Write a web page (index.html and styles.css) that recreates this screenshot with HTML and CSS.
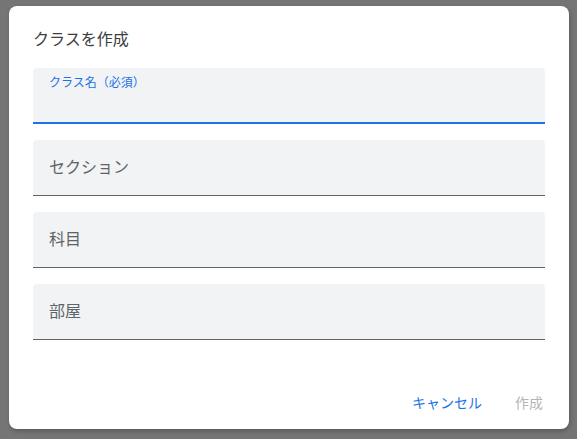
FILE: index.html
```html
<!DOCTYPE html>
<html lang="ja">
<head>
  <meta charset="UTF-8" />
  <title>クラスを作成</title>
  <link rel="stylesheet" href="styles.css">
</head>
<body>
  <div class="dialog">
    <h2 class="dialog-title">クラスを作成</h2>

    <div class="fields">
      <div class="field active">
        <span class="field-label">クラス名（必須）</span>
      </div>
      <div class="field">
        <span class="field-placeholder">セクション</span>
      </div>
      <div class="field">
        <span class="field-placeholder">科目</span>
      </div>
      <div class="field">
        <span class="field-placeholder">部屋</span>
      </div>
    </div>

    <div class="actions">
      <button class="btn btn-cancel">キャンセル</button>
      <button class="btn btn-create" disabled>作成</button>
    </div>
  </div>
</body>
</html>
```

FILE: styles.css
```css
body {
  margin: 0;
  padding: 6px 9px;
  background: #757575;
  font-family: "Noto Sans CJK JP", "Noto Sans", Roboto, sans-serif;
  height: 439px;
  box-sizing: border-box;
}

.dialog {
  width: 560px;
  height: 423px;
  box-sizing: border-box;
  background: #fff;
  border-radius: 8px;
  padding: 22px 24px 0;
  box-shadow: 1px 2px 4px rgba(0,0,0,0.25);
  display: flex;
  flex-direction: column;
}

.dialog-title {
  margin: 0 0 20px;
  font-size: 16px;
  line-height: 20px;
  font-weight: 400;
  color: #3c4043;
}

.fields {
  display: flex;
  flex-direction: column;
  gap: 16px;
}

.field {
  height: 56px;
  box-sizing: border-box;
  background: #f1f3f4;
  border-radius: 4px 4px 0 0;
  border-bottom: 1px solid #5f6368;
  padding: 0 16px;
  display: flex;
  align-items: center;
}

.field.active {
  border-bottom: 2px solid #1a73e8;
  align-items: flex-start;
  padding-top: 6px;
}

.field-label {
  font-size: 12px;
  line-height: 16px;
  color: #1a73e8;
}

.field-placeholder {
  font-size: 16px;
  line-height: 20px;
  color: #5f6368;
  margin-top: -4px;
}

.actions {
  display: flex;
  justify-content: flex-end;
  gap: 33px;
  margin-top: auto;
  height: 36px;
  margin-bottom: 9px;
  padding-right: 2px;
}

.btn {
  background: none;
  border: none;
  padding: 0;
  font-family: inherit;
  font-size: 14px;
  line-height: 36px;
  cursor: pointer;
}

.btn-cancel {
  color: #1a73e8;
}

.btn-create {
  color: #b3b5b7;
  cursor: default;
}
```
